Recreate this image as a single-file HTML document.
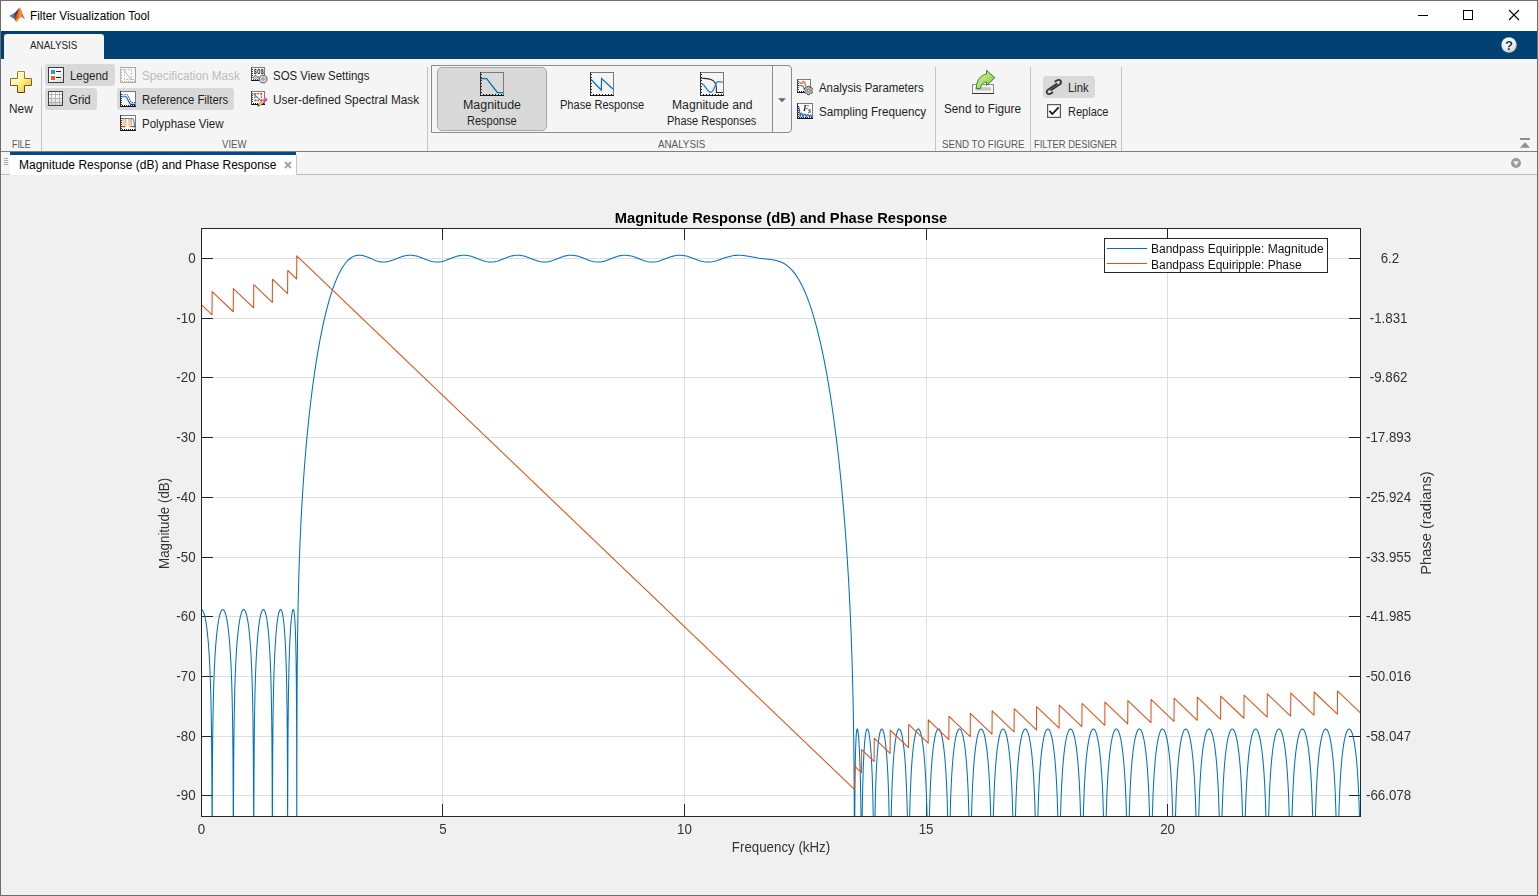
<!DOCTYPE html>
<html><head><meta charset="utf-8"><title>Filter Visualization Tool</title>
<style>
html,body{margin:0;padding:0}
body{width:1538px;height:896px;position:relative;overflow:hidden;background:#f0f0f0;font-family:"Liberation Sans",sans-serif}
.t{position:absolute;white-space:nowrap;font-family:"Liberation Sans",sans-serif;transform-origin:0 0}
svg{position:absolute;overflow:visible}
svg text{font-family:"Liberation Sans",sans-serif}
svg text.sf{font-family:"Liberation Serif",serif}
</style></head><body>
<div style="position:absolute;left:0px;top:0px;width:1538px;height:31px;background:#fff"></div>
<svg style="left:9px;top:7.4px;will-change:transform" width="17" height="16" viewBox="0 0 17 16"><defs>
<linearGradient id="mlb" x1="0" y1="0" x2="1" y2="0"><stop offset="0" stop-color="#4aa3e0"/><stop offset="1" stop-color="#1f5fa8"/></linearGradient>
<linearGradient id="mlo" x1="0" y1="0" x2="1" y2="0"><stop offset="0" stop-color="#9a2c16"/><stop offset="0.45" stop-color="#ee7a2b"/><stop offset="0.62" stop-color="#f2a033"/><stop offset="0.8" stop-color="#d9492a"/><stop offset="1" stop-color="#b52a1f"/></linearGradient>
</defs>
<path d="M0.2 8.7L5.4 5.9C7.2 4.4 8.6 2.6 9.9 1L8.6 6.4L5 11.4L2.4 10.5Z" fill="url(#mlb)"/>
<path d="M5.2 7C6.8 6 8.8 3.2 10.4 0.7L9.8 6L6.6 12.2L4.8 10.9C5.8 9.6 6 8 5.2 7Z" fill="#7a2415" opacity="0.92"/>
<path d="M10.4 0.6C11.4 0.4 12 2 12.6 4C13.4 7 14.6 10.4 16 12.2C14.8 11.8 13.8 10 12.4 10C10.8 10.2 9.2 13.6 7.2 15L4.9 11.2C7.4 9.4 9.2 4.6 10.4 0.6Z" fill="url(#mlo)"/>
<path d="M7.2 15L6.2 13.2C8.4 12.4 9.8 10 11.2 9.2C10 10.6 9 13.8 7.2 15Z" fill="#f4b02c"/></svg>
<span class="t" style="left:30.2px;top:10.29px;font-size:12px;line-height:12px;color:#000;transform:scaleX(0.9789);">Filter Visualization Tool</span>
<svg style="left:1400px;top:0" width="138" height="31" viewBox="0 0 138 31"><g stroke="#000" stroke-width="1" fill="none" shape-rendering="crispEdges"><path d="M18 15.5h10"/><rect x="63.5" y="10.5" width="9" height="9"/></g><path d="M109 10l10 10M119 10l-10 10" stroke="#000" stroke-width="1.1" fill="none"/></svg>
<div style="position:absolute;left:0px;top:31px;width:1538px;height:28px;background:#004173"></div>
<div style="position:absolute;left:4px;top:34px;width:100px;height:25px;background:#f5f5f5;border-radius:3px 3px 0 0"></div>
<span class="t" style="left:30.3px;top:40.11px;font-size:10.5px;line-height:10.5px;color:#222;transform:scaleX(0.9372);">ANALYSIS</span>
<svg style="left:1501px;top:37px;will-change:transform" width="16" height="16" viewBox="0 0 16 16"><defs><radialGradient id="hg" cx="0.4" cy="0.3" r="0.8"><stop offset="0" stop-color="#ffffff"/><stop offset="0.6" stop-color="#e9e9e9"/><stop offset="1" stop-color="#b5b5b5"/></radialGradient></defs>
<circle cx="8" cy="8" r="7.7" fill="url(#hg)"/>
<text x="8" y="12.7" text-anchor="middle" font-size="13.2" font-weight="bold" fill="#27344f">?</text></svg>
<div style="position:absolute;left:0px;top:59px;width:1538px;height:92px;background:#f5f5f5"></div>
<div style="position:absolute;left:0px;top:151px;width:1538px;height:1px;background:#7f7f7f"></div>
<div style="position:absolute;left:41px;top:67px;width:1px;height:84px;background:#c4c4c4"></div>
<div style="position:absolute;left:427px;top:67px;width:1px;height:84px;background:#c4c4c4"></div>
<div style="position:absolute;left:935px;top:67px;width:1px;height:84px;background:#c4c4c4"></div>
<div style="position:absolute;left:1030px;top:67px;width:1px;height:84px;background:#c4c4c4"></div>
<div style="position:absolute;left:1121px;top:67px;width:1px;height:84px;background:#c4c4c4"></div>
<svg style="left:10px;top:71px;will-change:transform" width="22" height="22" viewBox="0 0 22 22"><defs><linearGradient id="npg" x1="0" y1="0" x2="1" y2="1"><stop offset="0" stop-color="#fffef0"/><stop offset="0.45" stop-color="#fff59a"/><stop offset="1" stop-color="#f2b90f"/></linearGradient>
<linearGradient id="nps" x1="0" y1="0" x2="0" y2="1"><stop offset="0" stop-color="#b08425"/><stop offset="1" stop-color="#5a3f0c"/></linearGradient></defs>
<path d="M7 0h8v7h7v8h-7v7h-8v-7h-7v-8h7z" fill="#fff" stroke="#fff" stroke-width="1.5" opacity="0.75"/>
<path d="M7.5 0.5h7v7h7v7h-7v7h-7v-7h-7v-7h7z" fill="url(#npg)" stroke="url(#nps)" stroke-width="1"/>
<path d="M8.5 13.5v-12h5M1.5 13.5v-5h6" fill="none" stroke="#fffde6" stroke-width="1" opacity="0.85"/></svg>
<span class="t" style="left:9.2px;top:103.29px;font-size:12px;line-height:12px;color:#1f1f1f;transform:scaleX(0.9873);">New</span>
<span class="t" style="left:11.7px;top:139.11px;font-size:10.5px;line-height:10.5px;color:#5a5a5a;transform:scaleX(0.8434);">FILE</span>
<div style="position:absolute;left:45px;top:64px;width:70px;height:22px;background:#d9d9d9;border-radius:3px"></div>
<svg style="left:48px;top:67px;will-change:transform" width="16" height="16" viewBox="0 0 16 16"><defs><linearGradient id="lgg" x1="0" y1="0" x2="1" y2="1"><stop offset="0.4" stop-color="#fff"/><stop offset="1" stop-color="#d4d4d8"/></linearGradient></defs>
<rect x="0.5" y="0.5" width="15" height="15" fill="url(#lgg)" stroke="#3d3d3d"/>
<rect x="3" y="3" width="4" height="4" fill="#2a9bd4"/><rect x="3" y="9" width="4" height="4" fill="#e8601c"/>
<rect x="8" y="4" width="5" height="1" fill="#333"/><rect x="8" y="10" width="5" height="1" fill="#222"/></svg>
<span class="t" style="left:70.2px;top:70.29px;font-size:12px;line-height:12px;color:#1f1f1f;transform:scaleX(0.9541);">Legend</span>
<div style="position:absolute;left:45px;top:88px;width:52px;height:22px;background:#d9d9d9;border-radius:3px"></div>
<svg style="left:48px;top:91px;will-change:transform" width="15" height="15" viewBox="0 0 15 15"><defs><linearGradient id="grg" x1="0" y1="0" x2="0" y2="1"><stop offset="0.3" stop-color="#fff"/><stop offset="1" stop-color="#d0d0d0"/></linearGradient></defs>
<rect x="0.5" y="0.5" width="14" height="14" fill="url(#grg)" stroke="#444"/>
<g stroke="#b4b4b4" stroke-width="1"><path d="M3.5 1v13M7.5 1v13M11.5 1v13M1 3.5h13M1 7.5h13M1 11.5h13"/></g></svg>
<span class="t" style="left:69.2px;top:94.29px;font-size:12px;line-height:12px;color:#1f1f1f;transform:scaleX(0.9573);">Grid</span>
<svg style="left:120px;top:67px;will-change:transform" width="16" height="16" viewBox="0 0 16 16"><rect x="0.5" y="0.5" width="15" height="15" fill="#f8f8f8" stroke="#a6a6a6"/><rect x="0" y="0" width="1" height="16" fill="#b8b8b8"/><rect x="0" y="15" width="16" height="1" fill="#b0b0b0"/><rect x="1" y="3" width="1" height="1" fill="#b8b8b8"/><rect x="1" y="5" width="1" height="1" fill="#b8b8b8"/><rect x="1" y="7" width="1" height="1" fill="#b8b8b8"/><rect x="1" y="9" width="1" height="1" fill="#b8b8b8"/><rect x="1" y="11" width="1" height="1" fill="#b8b8b8"/><rect x="1" y="13" width="1" height="1" fill="#b8b8b8"/><rect x="2" y="14" width="1" height="1" fill="#b0b0b0"/><rect x="4" y="14" width="1" height="1" fill="#b0b0b0"/><rect x="6" y="14" width="1" height="1" fill="#b0b0b0"/><rect x="8" y="14" width="1" height="1" fill="#b0b0b0"/><rect x="10" y="14" width="1" height="1" fill="#b0b0b0"/><rect x="12" y="14" width="1" height="1" fill="#b0b0b0"/><rect x="14" y="14" width="1" height="1" fill="#b0b0b0"/><rect x="4.5" y="2.5" width="7" height="10" fill="none" stroke="#f2b59c" stroke-dasharray="2 1.4"/><path d="M2 2.5h1.5L11 12.5h3" fill="none" stroke="#9cc3e6" stroke-width="1"/></svg>
<span class="t" style="left:142.3px;top:70.29px;font-size:12px;line-height:12px;color:#bcbcbc;transform:scaleX(0.9776);">Specification Mask</span>
<div style="position:absolute;left:117px;top:88px;width:117px;height:22px;background:#d9d9d9;border-radius:3px"></div>
<svg style="left:120px;top:91px;will-change:transform" width="16" height="16" viewBox="0 0 16 16"><defs><linearGradient id="rfg" x1="0" y1="0" x2="1" y2="1"><stop offset="0" stop-color="#4a9ad8"/><stop offset="1" stop-color="#163a96"/></linearGradient></defs><rect x="0.5" y="0.5" width="15" height="15" fill="#fff" stroke="#7a7a7a"/><rect x="0" y="0" width="1" height="16" fill="#333"/><rect x="0" y="15" width="16" height="1" fill="#151515"/><rect x="1" y="3" width="1" height="1" fill="#333"/><rect x="1" y="5" width="1" height="1" fill="#333"/><rect x="1" y="7" width="1" height="1" fill="#333"/><rect x="1" y="9" width="1" height="1" fill="#333"/><rect x="1" y="11" width="1" height="1" fill="#333"/><rect x="1" y="13" width="1" height="1" fill="#333"/><rect x="2" y="14" width="1" height="1" fill="#151515"/><rect x="4" y="14" width="1" height="1" fill="#151515"/><rect x="6" y="14" width="1" height="1" fill="#151515"/><rect x="8" y="14" width="1" height="1" fill="#151515"/><rect x="10" y="14" width="1" height="1" fill="#151515"/><rect x="12" y="14" width="1" height="1" fill="#151515"/><rect x="14" y="14" width="1" height="1" fill="#151515"/><path d="M2 5.5h4L10.5 13.5h4.5" fill="none" stroke="url(#rfg)" stroke-width="1.3"/><path d="M2 3.5h5L11.5 11.5h3.5" fill="none" stroke="url(#rfg)" stroke-width="1.2" stroke-dasharray="1.4 1"/></svg>
<span class="t" style="left:142.2px;top:94.29px;font-size:12px;line-height:12px;color:#1f1f1f;transform:scaleX(0.9435);">Reference Filters</span>
<svg style="left:120px;top:115px;will-change:transform" width="16" height="16" viewBox="0 0 16 16"><defs><linearGradient id="ppy" x1="0" y1="0" x2="0" y2="1"><stop offset="0" stop-color="#f0c060"/><stop offset="1" stop-color="#f8e0a0"/></linearGradient></defs><rect x="0.5" y="0.5" width="15" height="15" fill="#fff" stroke="#7a7a7a"/><rect x="0" y="0" width="1" height="16" fill="#333"/><rect x="0" y="15" width="16" height="1" fill="#151515"/><rect x="1" y="3" width="1" height="1" fill="#333"/><rect x="1" y="5" width="1" height="1" fill="#333"/><rect x="1" y="7" width="1" height="1" fill="#333"/><rect x="1" y="9" width="1" height="1" fill="#333"/><rect x="1" y="11" width="1" height="1" fill="#333"/><rect x="1" y="13" width="1" height="1" fill="#333"/><rect x="2" y="14" width="1" height="1" fill="#151515"/><rect x="4" y="14" width="1" height="1" fill="#151515"/><rect x="6" y="14" width="1" height="1" fill="#151515"/><rect x="8" y="14" width="1" height="1" fill="#151515"/><rect x="10" y="14" width="1" height="1" fill="#151515"/><rect x="12" y="14" width="1" height="1" fill="#151515"/><rect x="14" y="14" width="1" height="1" fill="#151515"/><rect x="2.4" y="4" width="2" height="7.5" fill="url(#ppy)"/><rect x="4.7" y="4" width="1.8" height="7.5" fill="#f4b8a0"/><rect x="8.2" y="4" width="2" height="7.5" fill="url(#ppy)"/><rect x="10.4" y="4" width="1.8" height="7.5" fill="#f2a890"/><rect x="2" y="11" width="3" height="1.2" fill="#e2480e"/><rect x="9.5" y="11" width="2" height="1.2" fill="#f0a010"/><rect x="11.5" y="11" width="2" height="1.2" fill="#e2480e"/><path d="M2 3.5h10.5C14 3.8 14.2 8 14.6 11.6" fill="none" stroke="#3a88cc" stroke-width="1.2"/><rect x="13.5" y="11" width="1.5" height="1.2" fill="#163a96"/></svg>
<span class="t" style="left:142.2px;top:118.29px;font-size:12px;line-height:12px;color:#1f1f1f;transform:scaleX(0.9570);">Polyphase View</span>
<svg style="left:251px;top:67px;will-change:transform" width="17" height="17" viewBox="0 0 17 17"><rect x="0.5" y="0.5" width="13" height="13" fill="#fff" stroke="#7a7a7a"/><rect x="0" y="0" width="1" height="14" fill="#4a4a4a"/><rect x="0" y="13" width="14" height="1" fill="#151515"/><rect x="1" y="2" width="1" height="1" fill="#4a4a4a"/><rect x="1" y="4" width="1" height="1" fill="#4a4a4a"/><rect x="1" y="6" width="1" height="1" fill="#4a4a4a"/><rect x="1" y="8" width="1" height="1" fill="#4a4a4a"/><rect x="1" y="10" width="1" height="1" fill="#4a4a4a"/><rect x="2" y="12" width="1" height="1" fill="#151515"/><rect x="4" y="12" width="1" height="1" fill="#151515"/><rect x="6" y="12" width="1" height="1" fill="#151515"/><rect x="8" y="12" width="1" height="1" fill="#151515"/><rect x="10" y="12" width="1" height="1" fill="#151515"/><rect x="12" y="12" width="1" height="1" fill="#151515"/><text transform="translate(3 6.9) scale(0.6 1)" font-size="6.7" font-weight="bold" fill="#2a2a2a" stroke="#2a2a2a" stroke-width="0.3" letter-spacing="1.1">SOS</text><path d="M2 12.5L4.4 9.6L6.4 12L8.4 10L10 12.5Z" fill="#f4a88a"/><path d="M2 11L4.4 8.4L6.6 10.6L8 9.4" fill="none" stroke="#2f86d6" stroke-width="1.1"/><path d="M10.4 8.3h3.4l2.1 2v3.4l-2.1 2.1h-3.4l-2.1-2.1v-3.4z" fill="#d4d4d4" stroke="#4c4c4c" stroke-width="0.9" stroke-linejoin="round"/><path d="M11.4 10h1.4v1.3h1.3v1.4h-1.3v1.3h-1.4v-1.3h-1.3v-1.4h1.3z" fill="#a4a4a4"/></svg>
<span class="t" style="left:272.9px;top:70.29px;font-size:12px;line-height:12px;color:#1f1f1f;transform:scaleX(0.9529);">SOS View Settings</span>
<svg style="left:251px;top:91px;will-change:transform" width="18" height="18" viewBox="0 0 18 18"><rect x="0.5" y="0.5" width="13" height="13" fill="#fff" stroke="#7a7a7a"/><rect x="0" y="0" width="1" height="14" fill="#4a4a4a"/><rect x="0" y="13" width="14" height="1" fill="#151515"/><rect x="1" y="2" width="1" height="1" fill="#4a4a4a"/><rect x="1" y="4" width="1" height="1" fill="#4a4a4a"/><rect x="1" y="6" width="1" height="1" fill="#4a4a4a"/><rect x="1" y="8" width="1" height="1" fill="#4a4a4a"/><rect x="1" y="10" width="1" height="1" fill="#4a4a4a"/><rect x="2" y="12" width="1" height="1" fill="#151515"/><rect x="4" y="12" width="1" height="1" fill="#151515"/><rect x="6" y="12" width="1" height="1" fill="#151515"/><rect x="8" y="12" width="1" height="1" fill="#151515"/><rect x="10" y="12" width="1" height="1" fill="#151515"/><rect x="12" y="12" width="1" height="1" fill="#151515"/><path d="M4.05 4V2.65H5.5M6.2 2.65H8M8.9 2.65H10.45V4.2M10.45 5.2V7.1M10.45 8.3V9.5H8.9M8 9.5H6.2M5.5 9.5H4.05V8.3M4.05 7.1V5.2" fill="none" stroke="#e2480e" stroke-width="1.3"/><path d="M2.2 2.6L9.8 9.3" stroke="#2f86d6" stroke-width="1.1"/><g transform="translate(6.2 15.6) rotate(-41)"><path d="M0 0L2.4 -1.3L2.4 1.3Z" fill="#222"/><rect x="2.4" y="-1.4" width="6.2" height="2.8" fill="#c98a35"/><rect x="2.4" y="-0.6" width="6.2" height="1.1" fill="#f3cd80"/><rect x="8.6" y="-1.7" width="3.8" height="3.4" fill="#cf3f86"/><rect x="8.6" y="-1.7" width="3.8" height="1.5" fill="#ea7ab0"/></g></svg>
<span class="t" style="left:272.9px;top:94.29px;font-size:12px;line-height:12px;color:#1f1f1f;transform:scaleX(0.9875);">User-defined Spectral Mask</span>
<span class="t" style="left:222.2px;top:139.11px;font-size:10.5px;line-height:10.5px;color:#5a5a5a;transform:scaleX(0.9130);">VIEW</span>
<div style="position:absolute;left:431px;top:65px;width:360px;height:67px;border:1px solid #8c8c8c;border-radius:0 4px 4px 0;box-sizing:content-box;width:359px;height:66px"></div>
<div style="position:absolute;left:772px;top:66px;width:1px;height:66px;background:#8c8c8c"></div>
<div style="position:absolute;left:437px;top:67px;width:109px;height:63px;background:#d9d9d9;border:1px solid #a6a6a6;border-radius:5px;box-sizing:border-box;width:110px;height:64px"></div>
<svg style="left:480px;top:72px;will-change:transform" width="24" height="24" viewBox="0 0 24 24"><rect x="0.5" y="0.5" width="23" height="23" fill="none" stroke="#7a7a7a"/><rect x="0" y="0" width="1" height="24" fill="#333"/><rect x="0" y="23" width="24" height="1" fill="#151515"/><rect x="1" y="2" width="1" height="1" fill="#333"/><rect x="1" y="5" width="1" height="1" fill="#333"/><rect x="1" y="8" width="1" height="1" fill="#333"/><rect x="1" y="11" width="1" height="1" fill="#333"/><rect x="1" y="14" width="1" height="1" fill="#333"/><rect x="1" y="17" width="1" height="1" fill="#333"/><rect x="1" y="20" width="1" height="1" fill="#333"/><rect x="3" y="22" width="1" height="1" fill="#151515"/><rect x="6" y="22" width="1" height="1" fill="#151515"/><rect x="9" y="22" width="1" height="1" fill="#151515"/><rect x="12" y="22" width="1" height="1" fill="#151515"/><rect x="15" y="22" width="1" height="1" fill="#151515"/><rect x="18" y="22" width="1" height="1" fill="#151515"/><rect x="21" y="22" width="1" height="1" fill="#151515"/><path d="M1 6.5h5.6L17.4 20.5H23" fill="none" stroke="#0072bd" stroke-width="1.25"/></svg>
<span class="t" style="left:463.1px;top:99.29px;font-size:12px;line-height:12px;color:#1f1f1f;transform:scaleX(1.0351);">Magnitude</span>
<span class="t" style="left:467.3px;top:115.29px;font-size:12px;line-height:12px;color:#1f1f1f;transform:scaleX(0.9180);">Response</span>
<svg style="left:590px;top:72px;will-change:transform" width="24" height="24" viewBox="0 0 24 24"><rect x="0.5" y="0.5" width="23" height="23" fill="none" stroke="#7a7a7a"/><rect x="0" y="0" width="1" height="24" fill="#333"/><rect x="0" y="23" width="24" height="1" fill="#151515"/><rect x="1" y="2" width="1" height="1" fill="#333"/><rect x="1" y="5" width="1" height="1" fill="#333"/><rect x="1" y="8" width="1" height="1" fill="#333"/><rect x="1" y="11" width="1" height="1" fill="#333"/><rect x="1" y="14" width="1" height="1" fill="#333"/><rect x="1" y="17" width="1" height="1" fill="#333"/><rect x="1" y="20" width="1" height="1" fill="#333"/><rect x="3" y="22" width="1" height="1" fill="#151515"/><rect x="6" y="22" width="1" height="1" fill="#151515"/><rect x="9" y="22" width="1" height="1" fill="#151515"/><rect x="12" y="22" width="1" height="1" fill="#151515"/><rect x="15" y="22" width="1" height="1" fill="#151515"/><rect x="18" y="22" width="1" height="1" fill="#151515"/><rect x="21" y="22" width="1" height="1" fill="#151515"/><path d="M1 7.2L11.3 18.2L11.6 6.6L23 17" fill="none" stroke="#0072bd" stroke-width="1.25"/></svg>
<span class="t" style="left:559.9px;top:99.29px;font-size:12px;line-height:12px;color:#1f1f1f;transform:scaleX(0.9213);">Phase Response</span>
<svg style="left:700px;top:72px;will-change:transform" width="24" height="24" viewBox="0 0 24 24"><rect x="0.5" y="0.5" width="23" height="23" fill="none" stroke="#7a7a7a"/><rect x="0" y="0" width="1" height="24" fill="#333"/><rect x="0" y="23" width="24" height="1" fill="#151515"/><rect x="1" y="2" width="1" height="1" fill="#333"/><rect x="1" y="5" width="1" height="1" fill="#333"/><rect x="1" y="8" width="1" height="1" fill="#333"/><rect x="1" y="11" width="1" height="1" fill="#333"/><rect x="1" y="14" width="1" height="1" fill="#333"/><rect x="1" y="17" width="1" height="1" fill="#333"/><rect x="1" y="20" width="1" height="1" fill="#333"/><rect x="3" y="22" width="1" height="1" fill="#151515"/><rect x="6" y="22" width="1" height="1" fill="#151515"/><rect x="9" y="22" width="1" height="1" fill="#151515"/><rect x="12" y="22" width="1" height="1" fill="#151515"/><rect x="15" y="22" width="1" height="1" fill="#151515"/><rect x="18" y="22" width="1" height="1" fill="#151515"/><rect x="21" y="22" width="1" height="1" fill="#151515"/><path d="M1 6C4 6.6 8 6.2 11.5 7.8C15 9.6 16.4 13 16.4 16V20.5H23" fill="none" stroke="#2a2a2a" stroke-width="1.1"/><path d="M1.5 11.4C6 13 7 20.2 10.6 20.2C14.4 20.2 14.6 12 17 10C19 8.8 21 10 23 10.4" fill="none" stroke="#1f80cc" stroke-width="1.3"/></svg>
<span class="t" style="left:671.6px;top:99.29px;font-size:12px;line-height:12px;color:#1f1f1f;transform:scaleX(1.0128);">Magnitude and</span>
<span class="t" style="left:667.3px;top:115.29px;font-size:12px;line-height:12px;color:#1f1f1f;transform:scaleX(0.9169);">Phase Responses</span>
<svg style="left:778px;top:98px" width="8" height="5" viewBox="0 0 8 5"><path d="M0 0.3h8L4 4.3z" fill="#666"/></svg>
<span class="t" style="left:657.8px;top:139.11px;font-size:10.5px;line-height:10.5px;color:#5a5a5a;transform:scaleX(0.9332);">ANALYSIS</span>
<svg style="left:797px;top:79px;will-change:transform" width="17" height="17" viewBox="0 0 17 17"><rect x="0.5" y="0.5" width="13" height="13" fill="#fff" stroke="#7a7a7a"/><rect x="0" y="0" width="1" height="14" fill="#4a4a4a"/><rect x="0" y="13" width="14" height="1" fill="#151515"/><rect x="1" y="2" width="1" height="1" fill="#4a4a4a"/><rect x="1" y="4" width="1" height="1" fill="#4a4a4a"/><rect x="1" y="6" width="1" height="1" fill="#4a4a4a"/><rect x="1" y="8" width="1" height="1" fill="#4a4a4a"/><rect x="1" y="10" width="1" height="1" fill="#4a4a4a"/><rect x="2" y="12" width="1" height="1" fill="#151515"/><rect x="4" y="12" width="1" height="1" fill="#151515"/><rect x="6" y="12" width="1" height="1" fill="#151515"/><rect x="8" y="12" width="1" height="1" fill="#151515"/><rect x="10" y="12" width="1" height="1" fill="#151515"/><rect x="12" y="12" width="1" height="1" fill="#151515"/><path d="M2 3.6C3.2 3 3.6 5.2 4.8 4.4C6 3.4 6 2.2 7 2.6C8.2 3.2 8 6.4 9.4 8" fill="none" stroke="#e8703a" stroke-width="1.35"/><path d="M2 6.6H5C6.6 6.8 7 8.6 7.6 11" fill="none" stroke="#3f8ad4" stroke-width="1.35"/><path d="M13.68 8.95L14.69 8.62L15.59 10.17L14.80 10.89L14.80 12.11L15.59 12.83L14.69 14.38L13.68 14.05L12.62 14.66L12.40 15.71L10.60 15.71L10.38 14.66L9.32 14.05L8.31 14.38L7.41 12.83L8.20 12.11L8.20 10.89L7.41 10.17L8.31 8.62L9.32 8.95L10.38 8.34L10.60 7.29L12.40 7.29L12.62 8.34Z" fill="#c6c6c6" stroke="#404040" stroke-width="0.9" stroke-linejoin="round"/><circle cx="11.5" cy="11.5" r="1.29" fill="#fff" stroke="#4a4a4a" stroke-width="0.9"/></svg>
<span class="t" style="left:818.8px;top:82.29px;font-size:12px;line-height:12px;color:#1f1f1f;transform:scaleX(0.9506);">Analysis Parameters</span>
<svg style="left:797px;top:103px;will-change:transform" width="16" height="16" viewBox="0 0 16 16"><rect x="0.5" y="0.5" width="15" height="15" fill="#fff" stroke="#7a7a7a"/><rect x="0" y="0" width="1" height="16" fill="#333"/><rect x="0" y="15" width="16" height="1" fill="#151515"/><rect x="1" y="3" width="1" height="1" fill="#333"/><rect x="1" y="5" width="1" height="1" fill="#333"/><rect x="1" y="7" width="1" height="1" fill="#333"/><rect x="1" y="9" width="1" height="1" fill="#333"/><rect x="1" y="11" width="1" height="1" fill="#333"/><rect x="1" y="13" width="1" height="1" fill="#333"/><rect x="2" y="14" width="1" height="1" fill="#151515"/><rect x="4" y="14" width="1" height="1" fill="#151515"/><rect x="6" y="14" width="1" height="1" fill="#151515"/><rect x="8" y="14" width="1" height="1" fill="#151515"/><rect x="10" y="14" width="1" height="1" fill="#151515"/><rect x="12" y="14" width="1" height="1" fill="#151515"/><rect x="14" y="14" width="1" height="1" fill="#151515"/><g font-style="italic" font-weight="bold" fill="#303030"><text class="sf" x="6" y="7.8" font-size="8.6">F</text><text class="sf" x="11" y="9.7" font-size="8">s</text></g><path d="M1.6 4C2.6 5.4 2.8 10 3.2 14.3C3.6 9.4 5.2 8.6 6 14.3C6.5 10.4 8.6 10 9.3 14.3C9.8 11 11.8 10.6 12.5 14.3C12.9 11.6 14.2 11.4 14.8 14" fill="none" stroke="#1f68c4" stroke-width="1.2"/></svg>
<span class="t" style="left:818.8px;top:106.29px;font-size:12px;line-height:12px;color:#1f1f1f;transform:scaleX(0.9741);">Sampling Frequency</span>
<svg style="left:971px;top:70px;will-change:transform" width="25" height="24" viewBox="0 0 25 24"><defs><linearGradient id="sfg" x1="0" y1="0" x2="1" y2="1"><stop offset="0" stop-color="#d8f0a0"/><stop offset="0.5" stop-color="#b2e070"/><stop offset="1" stop-color="#6db83a"/></linearGradient></defs>
<rect x="1.5" y="14.5" width="21" height="9" fill="#f4f4f4" stroke="#8c8c8c"/><rect x="1" y="23" width="22" height="1" fill="#333"/>
<rect x="4.3" y="17.2" width="15.5" height="3.4" fill="#c6c6c6"/>
<path d="M15.6 0.4L23.8 7.8L15.6 15.4V12C12.6 12 10.2 14 9.4 18.6H5.3C5.2 10.6 9.6 5 15.6 4Z" fill="url(#sfg)" stroke="#2f8020" stroke-width="1" stroke-linejoin="round"/></svg>
<span class="t" style="left:944.3px;top:103.29px;font-size:12px;line-height:12px;color:#1f1f1f;transform:scaleX(0.9783);">Send to Figure</span>
<span class="t" style="left:941.7px;top:139.11px;font-size:10.5px;line-height:10.5px;color:#5a5a5a;transform:scaleX(0.9283);">SEND TO FIGURE</span>
<div style="position:absolute;left:1043px;top:76px;width:52px;height:22px;background:#d9d9d9;border-radius:3px"></div>
<svg style="left:1046px;top:79px;will-change:transform" width="16" height="17" viewBox="0 0 16 17"><g fill="none" stroke="#383838" stroke-width="1.9" stroke-linecap="round" stroke-linejoin="round">
<path d="M10.8 4.9L1.9 10.7A2.3 2.3 0 0 0 4.4 14.8L6.4 13.6"/><path d="M10.8 4.9L1.9 10.7A2.3 2.3 0 0 0 4.4 14.8L6.4 13.6" transform="rotate(180 7.9 8)"/></g></svg>
<span class="t" style="left:1068.2px;top:82.29px;font-size:12px;line-height:12px;color:#1f1f1f;transform:scaleX(0.9358);">Link</span>
<svg style="left:1047px;top:104px;will-change:transform" width="14" height="14" viewBox="0 0 14 14"><rect x="0.6" y="0.6" width="12.8" height="12.8" fill="#fff" stroke="#5a5a5a" stroke-width="1.2"/><path d="M2.4 6.9L5.3 10L11.6 3.4" fill="none" stroke="#111" stroke-width="1.7"/></svg>
<span class="t" style="left:1067.8px;top:106.29px;font-size:12px;line-height:12px;color:#1f1f1f;transform:scaleX(0.9199);">Replace</span>
<span class="t" style="left:1034.1px;top:139.11px;font-size:10.5px;line-height:10.5px;color:#5a5a5a;transform:scaleX(0.8921);">FILTER DESIGNER</span>
<svg style="left:1520px;top:138px" width="10" height="10" viewBox="0 0 10 10"><rect x="0" y="0" width="10" height="2" fill="#8f8f8f"/><path d="M5 4.2L10 9.8H0z" fill="#8f8f8f"/></svg>
<div style="position:absolute;left:0px;top:152px;width:1538px;height:22px;background:#f5f5f5"></div>
<div style="position:absolute;left:0px;top:174px;width:1538px;height:1px;background:#b9b9b9"></div>
<div style="position:absolute;left:1px;top:152px;width:9px;height:22px;background:#f5f5f5;border-right:1px solid #bdbdbd;border-bottom:1px solid #bdbdbd;border-radius:0 0 2px 0"></div>
<div style="position:absolute;left:4px;top:158px;width:4px;height:1px;background:#a8a8a8"></div>
<div style="position:absolute;left:4px;top:160px;width:4px;height:1px;background:#a8a8a8"></div>
<div style="position:absolute;left:4px;top:162px;width:4px;height:1px;background:#a8a8a8"></div>
<div style="position:absolute;left:4px;top:164px;width:4px;height:1px;background:#a8a8a8"></div>
<div style="position:absolute;left:10px;top:152px;width:286px;height:23px;background:#fff"></div>
<div style="position:absolute;left:10px;top:152px;width:286px;height:3px;background:#004b87"></div>
<div style="position:absolute;left:296px;top:155px;width:1px;height:20px;background:#c8c8c8"></div>
<span class="t" style="left:19.2px;top:159.29px;font-size:12px;line-height:12px;color:#000;transform:scaleX(1.0001);">Magnitude Response (dB) and Phase Response</span>
<svg style="left:284px;top:161px" width="8" height="8" viewBox="0 0 8 8"><path d="M1 1l6 6M7 1l-6 6" stroke="#a0a0a0" stroke-width="1.8" fill="none"/></svg>
<svg style="left:1511px;top:158px" width="10" height="10" viewBox="0 0 10 10"><circle cx="5" cy="5" r="5" fill="#9b9b9b"/><path d="M2.2 3.3h5.6L5 7.8z" fill="#f5f5f5"/></svg>
<svg style="left:0;top:0;will-change:transform" width="1538" height="896" viewBox="0 0 1538 896">
<defs><clipPath id="axclip"><rect x="201" y="228" width="1160" height="589"/></clipPath></defs>
<rect x="201" y="228" width="1160" height="589" fill="#fff"/>
<g stroke="#dfdfdf" stroke-width="1" shape-rendering="crispEdges">
<line x1="202" x2="1360" y1="258.5" y2="258.5"/>
<line x1="202" x2="1360" y1="318.5" y2="318.5"/>
<line x1="202" x2="1360" y1="377.5" y2="377.5"/>
<line x1="202" x2="1360" y1="437.5" y2="437.5"/>
<line x1="202" x2="1360" y1="497.5" y2="497.5"/>
<line x1="202" x2="1360" y1="557.5" y2="557.5"/>
<line x1="202" x2="1360" y1="616.5" y2="616.5"/>
<line x1="202" x2="1360" y1="676.5" y2="676.5"/>
<line x1="202" x2="1360" y1="736.5" y2="736.5"/>
<line x1="202" x2="1360" y1="795.5" y2="795.5"/>
<line x1="442.5" x2="442.5" y1="229" y2="816"/>
<line x1="684.5" x2="684.5" y1="229" y2="816"/>
<line x1="926.5" x2="926.5" y1="229" y2="816"/>
<line x1="1167.5" x2="1167.5" y1="229" y2="816"/>
</g>
<g stroke="#262626" stroke-width="1" fill="none" shape-rendering="crispEdges">
<line x1="201.5" x2="213.0" y1="258.5" y2="258.5"/>
<line x1="1360.5" x2="1349.0" y1="258.5" y2="258.5"/>
<line x1="201.5" x2="213.0" y1="318.5" y2="318.5"/>
<line x1="1360.5" x2="1349.0" y1="318.5" y2="318.5"/>
<line x1="201.5" x2="213.0" y1="377.5" y2="377.5"/>
<line x1="1360.5" x2="1349.0" y1="377.5" y2="377.5"/>
<line x1="201.5" x2="213.0" y1="437.5" y2="437.5"/>
<line x1="1360.5" x2="1349.0" y1="437.5" y2="437.5"/>
<line x1="201.5" x2="213.0" y1="497.5" y2="497.5"/>
<line x1="1360.5" x2="1349.0" y1="497.5" y2="497.5"/>
<line x1="201.5" x2="213.0" y1="557.5" y2="557.5"/>
<line x1="1360.5" x2="1349.0" y1="557.5" y2="557.5"/>
<line x1="201.5" x2="213.0" y1="616.5" y2="616.5"/>
<line x1="1360.5" x2="1349.0" y1="616.5" y2="616.5"/>
<line x1="201.5" x2="213.0" y1="676.5" y2="676.5"/>
<line x1="1360.5" x2="1349.0" y1="676.5" y2="676.5"/>
<line x1="201.5" x2="213.0" y1="736.5" y2="736.5"/>
<line x1="1360.5" x2="1349.0" y1="736.5" y2="736.5"/>
<line x1="201.5" x2="213.0" y1="795.5" y2="795.5"/>
<line x1="1360.5" x2="1349.0" y1="795.5" y2="795.5"/>
<line x1="442.5" x2="442.5" y1="816.5" y2="804.0"/>
<line x1="442.5" x2="442.5" y1="228.5" y2="240.0"/>
<line x1="684.5" x2="684.5" y1="816.5" y2="804.0"/>
<line x1="684.5" x2="684.5" y1="228.5" y2="240.0"/>
<line x1="926.5" x2="926.5" y1="816.5" y2="804.0"/>
<line x1="926.5" x2="926.5" y1="228.5" y2="240.0"/>
<line x1="1167.5" x2="1167.5" y1="816.5" y2="804.0"/>
<line x1="1167.5" x2="1167.5" y1="228.5" y2="240.0"/>
</g>
<g clip-path="url(#axclip)" fill="none" stroke-width="1.05" stroke-linejoin="round">
<path stroke="#0072bd" d="M201.4 609.58L201.82 609.68L202.11 609.86L202.53 610.3L202.82 610.7L203.52 612.12L204.09 613.7L204.8 616.26L205.36 618.83L205.93 621.9L206.5 625.55L207.49 633.59L208.48 644.45L209.18 654.71L209.89 668.23L210.46 682.9L210.88 697.81L211.17 710.98L211.45 728.81L211.73 756.37L211.87 778.81L212.16 846.5L212.44 770.71L212.72 736.72L213.01 716.42L213.43 696L213.85 681.53L214.42 667.2L215.13 653.91L215.84 643.79L216.83 633.07L217.82 625.12L218.38 621.51L218.95 618.48L219.52 615.96L220.22 613.45L220.79 611.92L221.5 610.56L222.06 609.89L222.35 609.7L222.77 609.58L223.2 609.66L223.48 609.83L224.05 610.45L224.75 611.76L225.32 613.25L226.03 615.71L226.59 618.21L227.16 621.21L227.73 624.8L228.72 632.76L229.71 643.55L230.41 653.79L231.12 667.32L231.69 682.04L232.11 697.03L232.4 710.32L232.68 728.37L232.96 756.48L233.1 779.68L233.24 822.82L233.39 846.5L233.53 798.54L233.81 748.49L234.24 714.52L234.8 689.03L235.23 675.95L235.65 665.68L236.22 654.81L236.92 644.23L237.63 635.94L238.48 628.14L239.33 622.11L240.18 617.49L240.89 614.54L241.6 612.32L242.3 610.78L242.73 610.16L243.15 609.76L243.58 609.59L244 609.64L244.43 609.91L244.71 610.22L245.13 610.87L245.56 611.76L246.27 613.79L246.97 616.56L247.68 620.17L248.39 624.73L248.96 629.21L249.52 634.56L250.09 641.01L250.94 653.48L251.5 664.53L252.07 679.17L252.49 694.13L252.92 715.65L253.34 753.67L253.77 846.5L253.91 794.86L254.19 745.15L254.47 720.29L254.9 696.96L255.18 685.82L255.61 672.77L256.03 662.53L256.46 654.17L256.88 647.17L257.45 639.42L258.01 633.05L258.72 626.57L259.43 621.42L260.14 617.35L260.84 614.23L261.55 611.95L262.26 610.45L262.68 609.9L263.11 609.62L263.53 609.61L263.82 609.74L264.24 610.17L264.52 610.61L265.23 612.26L265.94 614.76L266.65 618.21L267.35 622.75L267.92 627.34L268.49 632.95L269.05 639.85L269.48 646.12L270.19 659.5L270.75 674.31L271.18 689.65L271.6 712.11L271.88 735.75L272.03 753.55L272.17 780.97L272.31 843.19L272.45 828.64L272.59 776.04L272.73 750.46L273.02 720.61L273.3 701.83L273.58 688.15L274.01 672.81L274.43 661.19L275.14 646.7L275.85 636.03L276.7 626.52L277.12 622.77L277.69 618.63L278.11 616.1L278.68 613.41L279.24 611.46L279.81 610.2L280.09 609.82L280.38 609.62L280.66 609.58L280.94 609.73L281.22 610.05L281.51 610.55L282.07 612.13L282.78 615.3L283.49 620.03L284.2 626.71L284.76 633.92L285.33 643.43L285.75 652.74L286.18 664.89L286.46 675.42L286.74 689.08L287.03 708.23L287.31 739.8L287.45 768.42L287.59 838.62L287.88 757.39L288.02 732.76L288.44 693.38L289.01 665.72L289.43 651.99L289.86 641.49L290.42 630.79L290.99 622.78L291.56 616.86L291.84 614.59L292.26 611.97L292.69 610.29L292.97 609.71L293.11 609.58L293.26 609.58L293.54 609.94L293.96 611.5L294.39 614.53L294.81 619.46L295.09 624.18L295.38 630.49L295.66 639.05L296.09 659.31L296.37 683.72L296.51 704.44L296.65 742.58L296.79 841.08L296.93 726.48L297.08 692.15L297.22 670.78L297.5 642.41L297.78 622.66L298.21 600.54L298.77 578.26L299.34 560.49L300.05 542.05L300.9 523.45L301.89 504.94L303.02 486.66L304.29 468.69L305.57 452.76L307.13 435.4L308.97 417.19L310.95 399.8L312.93 384.25L315.19 368.35L317.46 354.13L319.86 340.6L322.41 327.81L323.68 321.95L325.1 315.83L326.37 310.65L327.79 305.25L329.2 300.2L330.62 295.47L332.04 291.07L333.45 286.98L334.87 283.18L336.42 279.33L337.84 276.11L339.39 272.88L340.95 269.96L342.51 267.33L344.07 265L345.76 262.76L347.32 261L348.88 259.49L350.43 258.23L352.13 257.13L353.83 256.29L355.53 255.71L357.23 255.36L359.07 255.23L360.48 255.3L361.9 255.48L363.46 255.81L365.01 256.26L367.98 257.34L374.64 260.14L376.34 260.77L377.89 261.25L379.31 261.61L380.72 261.87L382.14 262.03L383.41 262.09L384.97 262.04L386.53 261.87L388.22 261.55L389.92 261.1L393.04 260.05L400.25 257.21L402.24 256.55L403.93 256.06L405.49 255.71L407.05 255.45L408.6 255.29L410.02 255.24L411.58 255.28L413.28 255.44L414.83 255.7L416.53 256.09L418.23 256.57L420.07 257.19L427.29 259.99L430.4 261.04L432.1 261.49L433.66 261.8L435.21 262.01L436.77 262.09L438.19 262.06L439.6 261.94L441.02 261.71L442.57 261.37L444.13 260.93L445.97 260.32L453.33 257.46L456.73 256.33L458.57 255.86L460.41 255.51L462.1 255.31L463.8 255.24L465.36 255.28L467.06 255.44L468.61 255.7L470.31 256.08L472.01 256.57L473.85 257.18L481.07 259.99L484.18 261.05L485.88 261.5L487.44 261.81L489 262.01L490.55 262.09L491.97 262.06L493.38 261.93L494.8 261.7L496.36 261.35L497.91 260.91L499.75 260.29L506.97 257.48L510.37 256.34L512.21 255.86L514.05 255.51L515.75 255.31L517.44 255.24L519 255.28L520.7 255.44L522.26 255.7L523.95 256.09L525.65 256.58L527.49 257.2L534.71 260.01L537.68 261.02L539.38 261.48L540.94 261.8L542.5 262L544.05 262.09L545.47 262.06L546.88 261.94L548.3 261.72L549.85 261.37L551.41 260.93L553.25 260.32L560.47 257.5L563.87 256.36L565.71 255.88L567.55 255.52L569.24 255.32L570.94 255.24L572.5 255.27L574.2 255.43L575.76 255.69L577.45 256.07L579.15 256.55L581.13 257.21L588.21 259.97L591.18 260.99L592.88 261.45L594.44 261.77L595.99 261.99L597.55 262.09L598.97 262.07L600.52 261.94L601.94 261.72L603.5 261.38L605.05 260.95L606.89 260.34L614.25 257.49L617.65 256.35L619.49 255.88L621.33 255.53L623.03 255.32L624.73 255.24L626.28 255.27L627.98 255.42L629.68 255.69L631.38 256.07L633.08 256.55L635.06 257.21L642.28 259.99L645.25 260.99L646.95 261.44L648.5 261.76L650.06 261.98L651.48 262.08L653.03 262.08L654.59 261.96L656.15 261.73L657.7 261.39L659.4 260.93L661.24 260.33L668.74 257.48L672.14 256.37L673.98 255.91L675.82 255.55L677.66 255.33L679.36 255.24L681.06 255.27L682.75 255.41L684.59 255.7L686.43 256.1L688.13 256.57L690.11 257.2L697.47 259.92L700.45 260.9L702.14 261.35L703.7 261.68L705.26 261.92L706.82 262.06L708.51 262.09L710.21 262L711.91 261.79L713.75 261.44L715.45 261.02L717.43 260.44L725.64 257.61L729.6 256.45L731.72 255.96L733.85 255.6L735.83 255.37L737.95 255.25L741.35 255.31L745.17 255.69L748.43 256.2L755.64 257.53L759.32 258.15L763.15 258.67L771.07 259.59L775.03 260.24L777.72 260.9L780.27 261.75L782.68 262.81L784.94 264.08L787.06 265.54L789.19 267.29L791.31 269.36L793.29 271.61L795.27 274.17L797.25 277.08L799.24 280.34L801.08 283.7L802.92 287.41L804.76 291.47L806.6 295.89L808.44 300.7L810.28 305.92L811.97 311.1L813.81 317.14L815.51 323.11L817.21 329.5L818.91 336.31L820.61 343.58L822.16 350.65L823.72 358.15L825.28 366.09L826.84 374.51L828.39 383.43L829.95 392.9L831.36 402.01L834.05 420.79L836.6 440.63L839.01 461.54L841.27 483.58L843.39 506.85L845.38 531.52L847.07 555.71L848.63 581.34L849.91 605.87L851.04 631.82L851.89 655.38L852.74 685.2L853.3 711.76L853.73 739.28L854.01 765.81L854.15 784.52L854.43 846.5L854.58 846.5L855 782.29L855.42 755.66L855.71 745.84L856.13 736.7L856.42 732.98L856.7 730.61L856.98 729.31L857.12 729.02L857.26 728.93L857.41 729.04L857.55 729.35L857.97 731.34L858.4 734.89L858.68 738.15L859.1 744.48L859.39 749.8L859.95 763.88L860.38 778.88L860.66 792.43L860.94 811.08L861.23 840.59L861.37 846.5L861.94 846.5L862.22 815.72L862.64 789.72L863.21 769.07L863.78 755.68L864.48 744.44L864.91 739.63L865.33 735.92L865.76 733.11L866.32 730.57L866.75 729.47L867.03 729.08L867.31 728.96L867.6 729.09L867.88 729.48L868.16 730.12L868.45 731.01L869.01 733.58L869.58 737.23L870.14 742.11L870.57 746.69L871.14 754.29L871.56 761.42L872.27 777.18L872.83 795.61L873.26 816.2L873.68 846.5L874.53 846.5L875.1 810.47L875.52 792.35L876.23 772.42L876.65 763.84L877.08 756.87L877.5 751.12L878.07 744.9L878.49 741.13L879.06 737.06L879.63 733.94L880.33 731.19L880.9 729.81L881.18 729.37L881.61 729.02L882.03 729.03L882.46 729.39L882.88 730.1L883.17 730.77L883.87 733.18L884.58 736.67L885.29 741.41L885.85 746.23L886.42 752.17L886.99 759.5L887.55 768.67L887.98 777.21L888.69 796.45L889.11 813.26L889.68 846.5L890.67 846.5L890.81 843.71L891.23 816.5L891.52 804.17L891.94 790.1L892.37 779.31L892.79 770.66L893.21 763.52L893.78 755.74L894.35 749.45L894.91 744.32L895.48 740.14L896.19 736.02L896.89 732.95L897.6 730.81L897.88 730.19L898.31 729.5L898.73 729.1L899.16 728.97L899.58 729.12L900.01 729.55L900.43 730.25L900.86 731.23L901.28 732.51L901.71 734.09L902.41 737.46L903.12 741.83L903.83 747.41L904.54 754.46L905.1 761.47L905.67 770.09L906.09 777.99L906.8 795.32L907.37 815.84L907.93 846.5L909.07 846.5L909.21 841.61L909.63 817.13L910.2 796.35L910.91 778.92L911.33 771.01L911.9 762.39L912.32 757.02L912.89 750.98L913.45 745.97L914.02 741.8L914.59 738.36L915.29 734.93L915.86 732.8L916.57 730.83L916.99 730L917.56 729.28L917.98 729.02L918.27 728.98L918.55 729.04L918.83 729.21L919.11 729.49L919.54 730.1L920.11 731.3L920.53 732.49L921.1 734.5L921.52 736.34L922.37 740.96L923.22 747.06L924.07 755.01L924.78 763.52L925.34 772.04L925.91 782.71L926.33 792.77L926.76 805.55L927.04 816.38L927.61 846.5L928.88 846.5L929.31 822.72L929.59 810.64L930.01 796.73L930.44 785.97L931 774.69L931.57 765.77L932.28 756.91L933.13 748.66L933.98 742.33L934.97 736.8L935.39 734.95L935.96 732.91L936.38 731.67L936.95 730.4L937.37 729.72L937.94 729.16L938.22 729.02L938.5 728.98L938.79 729.04L939.07 729.19L939.64 729.79L940.2 730.78L940.77 732.17L941.19 733.5L941.9 736.29L942.47 739.07L943.03 742.42L943.6 746.39L944.59 755.21L945.44 765.28L946.01 773.83L946.43 781.59L947.14 798.46L947.7 818.12L948.27 846.5L949.54 846.5L950.11 818.41L950.39 807.59L950.82 794.84L951.24 784.78L951.67 776.55L952.23 767.55L952.8 760.21L953.51 752.75L954.22 746.74L954.92 741.87L955.77 737.27L956.62 733.81L957.05 732.46L957.61 731.02L958.04 730.2L958.46 729.59L958.89 729.19L959.17 729.04L959.45 728.98L959.73 729L960.02 729.12L960.44 729.47L960.87 730.03L961.29 730.79L961.86 732.15L962.28 733.43L963.13 736.73L963.98 741.11L964.83 746.78L965.54 752.71L966.25 760.04L966.81 767.21L967.38 775.94L967.8 783.89L968.23 793.51L968.79 810.37L969.22 828.32L969.5 845.2L969.64 846.5L970.92 846.5L971.48 817.65L971.91 802.72L972.33 791.31L972.76 782.13L973.32 772.24L973.89 764.23L974.6 756.13L975.3 749.61L976.01 744.31L976.72 740.01L977.57 735.94L978.42 732.9L978.84 731.72L979.27 730.77L979.69 730.02L980.12 729.48L980.54 729.14L980.82 729.02L981.11 728.98L981.39 729.03L981.67 729.17L982.1 729.54L982.66 730.35L983.09 731.19L983.65 732.64L984.08 733.98L984.93 737.39L985.78 741.87L986.63 747.63L987.33 753.62L988.04 761L988.61 768.22L989.17 777L989.74 787.99L990.16 798.36L990.59 811.59L990.87 822.9L991.3 846.5L992.71 846.5L993.42 812.81L994.13 792.04L994.69 780.19L995.26 770.83L995.83 763.21L996.53 755.43L997.24 749.14L997.95 744.01L998.66 739.83L999.51 735.86L1000.35 732.88L1001.2 730.79L1001.63 730.05L1002.05 729.51L1002.48 729.16L1002.76 729.03L1003.04 728.98L1003.33 729.02L1003.61 729.15L1004.03 729.49L1004.6 730.25L1005.03 731.04L1005.59 732.43L1006.02 733.71L1007.01 737.6L1007.86 742.07L1008.71 747.78L1009.41 753.71L1010.12 761L1010.69 768.1L1011.25 776.71L1012.1 793.93L1012.81 815.43L1013.38 843.51L1013.52 846.5L1014.79 846.5L1014.93 843.8L1015.22 827.78L1015.64 810.49L1016.07 797.7L1016.63 784.67L1017.2 774.53L1017.91 764.53L1018.75 755.19L1019.6 747.93L1020.59 741.39L1021.58 736.5L1022.15 734.32L1022.72 732.54L1023.28 731.15L1023.85 730.11L1024.42 729.41L1024.98 729.05L1025.26 728.99L1025.69 729.05L1026.26 729.42L1026.82 730.13L1027.39 731.18L1027.95 732.58L1028.52 734.35L1029.23 737.14L1029.79 739.87L1030.36 743.1L1030.93 746.89L1031.92 755.15L1032.91 766.2L1033.47 774.29L1033.9 781.56L1034.32 790.23L1034.75 800.88L1035.31 820.04L1035.88 846.5L1037.3 846.5L1037.86 817.64L1038.57 795.56L1038.99 785.95L1039.56 775.65L1040.13 767.33L1040.69 760.45L1041.4 753.36L1042.11 747.57L1042.96 741.98L1043.81 737.6L1044.8 733.76L1045.22 732.49L1045.79 731.12L1046.21 730.32L1046.78 729.54L1047.2 729.18L1047.77 728.98L1048.33 729.1L1048.76 729.4L1049.33 730.09L1049.75 730.83L1050.32 732.11L1050.74 733.31L1051.73 736.95L1052.58 741.13L1053.43 746.47L1054.28 753.23L1054.99 760.25L1055.55 767.06L1056.12 775.27L1056.69 785.41L1057.11 794.82L1057.82 816.3L1058.38 844.33L1058.53 846.5L1059.8 846.5L1059.94 844.89L1060.22 828.83L1060.65 811.5L1061.07 798.68L1061.64 785.61L1062.35 773.24L1063.05 763.66L1063.9 754.67L1064.75 747.62L1065.74 741.26L1066.73 736.47L1067.3 734.33L1067.87 732.58L1068.43 731.19L1069 730.15L1069.56 729.45L1070.13 729.06L1070.41 728.99L1070.84 729.03L1071.4 729.36L1071.97 730.01L1072.54 730.99L1073.1 732.31L1073.67 733.99L1074.38 736.63L1074.94 739.22L1075.65 743.12L1076.22 746.85L1077.21 754.96L1078.2 765.75L1078.76 773.61L1079.19 780.65L1079.61 789L1080.04 799.17L1080.46 812.06L1080.75 822.99L1081.17 845.7L1081.31 846.5L1082.59 846.5L1082.73 844.19L1083.29 816.37L1084 795L1084.43 785.61L1084.99 775.51L1085.56 767.32L1086.12 760.52L1086.83 753.51L1087.68 746.74L1088.53 741.4L1089.38 737.19L1090.37 733.51L1090.79 732.3L1091.36 730.98L1091.79 730.22L1092.35 729.49L1092.78 729.15L1093.34 728.98L1093.91 729.12L1094.33 729.43L1094.9 730.12L1095.32 730.85L1095.89 732.12L1096.31 733.31L1097.31 736.9L1098.15 741.01L1099 746.24L1099.85 752.85L1100.56 759.69L1101.27 768.14L1101.83 776.48L1102.4 786.79L1102.82 796.39L1103.53 818.43L1104.1 846.5L1105.51 846.5L1105.66 842.91L1106.22 815.73L1106.79 798.22L1107.21 788.28L1107.64 780.1L1108.06 773.19L1108.63 765.44L1109.62 754.8L1110.61 746.78L1111.18 743.09L1111.88 739.22L1112.45 736.65L1113.16 734.03L1113.72 732.35L1114.29 731.03L1114.86 730.05L1115.42 729.39L1115.99 729.04L1116.27 728.98L1116.7 729.05L1117.26 729.4L1117.83 730.07L1118.39 731.06L1118.96 732.39L1119.53 734.07L1120.09 736.12L1120.66 738.59L1121.22 741.5L1122.22 747.85L1123.06 754.85L1123.91 763.76L1124.62 773.21L1125.33 785.37L1125.89 798.14L1126.32 810.59L1126.74 827.25L1127.03 842.47L1127.17 846.5L1128.58 846.5L1129.15 819.06L1129.86 796.89L1130.28 787.24L1130.85 776.88L1131.41 768.51L1132.12 760.03L1132.83 753.16L1133.68 746.53L1134.53 741.26L1135.38 737.13L1136.37 733.49L1136.79 732.29L1137.36 730.99L1137.78 730.23L1138.35 729.5L1138.77 729.16L1139.34 728.98L1139.91 729.11L1140.33 729.41L1140.9 730.08L1141.32 730.79L1141.89 732.03L1142.31 733.19L1143.16 736.12L1144.01 739.97L1144.86 744.88L1145.57 749.94L1146.28 756.08L1146.98 763.6L1147.55 770.91L1148.12 779.79L1148.68 790.89L1149.11 801.36L1149.53 814.73L1150.24 846.5L1151.65 846.5L1152.36 814.91L1153.07 794.26L1153.49 785.11L1154.06 775.22L1154.63 767.17L1155.19 760.47L1155.9 753.54L1156.75 746.85L1157.6 741.53L1158.45 737.34L1159.44 733.66L1159.86 732.43L1160.43 731.1L1160.85 730.32L1161.42 729.56L1161.99 729.11L1162.55 728.97L1163.12 729.14L1163.68 729.61L1164.25 730.4L1164.67 731.2L1165.24 732.57L1165.67 733.82L1166.66 737.56L1167.51 741.81L1168.35 747.18L1169.2 753.96L1169.91 760.97L1170.48 767.74L1171.04 775.89L1171.61 785.94L1172.03 795.24L1172.74 816.35L1173.31 843.6L1173.45 846.5L1174.87 846.5L1175.43 818.87L1176 800.55L1176.42 790.26L1176.85 781.83L1177.41 772.6L1177.98 765.02L1178.97 754.58L1179.96 746.68L1180.53 743.04L1181.23 739.21L1181.8 736.67L1182.51 734.06L1183.07 732.4L1183.64 731.08L1184.21 730.09L1184.91 729.3L1185.48 729.01L1185.9 729L1186.19 729.09L1186.75 729.49L1187.32 730.2L1187.89 731.23L1188.45 732.59L1189.02 734.3L1189.58 736.39L1190.15 738.88L1190.72 741.82L1191.71 748.2L1192.56 755.22L1193.41 764.14L1194.11 773.6L1194.82 785.76L1195.39 798.52L1195.81 810.96L1196.24 827.59L1196.52 842.78L1196.66 846.5L1198.08 846.5L1198.78 814.26L1199.49 793.92L1199.92 784.87L1200.48 775.07L1201.05 767.08L1201.62 760.43L1202.32 753.54L1203.17 746.87L1204.02 741.58L1204.87 737.4L1205.86 733.71L1206.29 732.48L1206.85 731.14L1207.28 730.36L1207.84 729.59L1208.41 729.13L1208.97 728.98L1209.54 729.12L1210.11 729.58L1210.67 730.34L1211.1 731.12L1211.66 732.46L1212.09 733.68L1213.08 737.35L1213.93 741.52L1214.78 746.79L1215.63 753.43L1216.33 760.29L1217.04 768.75L1217.61 777.08L1218.17 787.38L1218.6 796.96L1219.31 818.89L1219.87 846.5L1221.29 846.5L1221.43 844.11L1221.71 828.6L1222.14 811.71L1222.85 792.25L1223.41 780.93L1223.98 771.9L1224.69 762.81L1225.39 755.49L1226.1 749.5L1226.81 744.55L1227.66 739.75L1228.51 735.98L1229.36 733.1L1229.78 731.97L1230.35 730.75L1230.77 730.05L1231.34 729.39L1231.76 729.1L1232.33 728.98L1232.89 729.16L1233.46 729.64L1234.03 730.43L1234.45 731.23L1235.02 732.59L1235.44 733.84L1236.43 737.57L1237.28 741.78L1238.13 747.12L1238.98 753.83L1239.69 760.77L1240.25 767.46L1240.82 775.5L1241.39 785.38L1241.81 794.5L1242.52 815.07L1243.23 846.5L1244.64 846.5L1245.35 815.44L1245.77 802.01L1246.2 791.49L1246.76 780.35L1247.33 771.44L1247.9 764.1L1248.6 756.55L1249.31 750.38L1250.02 745.28L1250.87 740.33L1251.72 736.44L1252.57 733.45L1252.99 732.26L1253.56 730.98L1253.98 730.23L1254.55 729.51L1254.97 729.17L1255.54 728.98L1256.11 729.1L1256.67 729.52L1257.24 730.24L1257.66 730.99L1258.23 732.28L1258.65 733.46L1259.64 737.04L1260.63 741.88L1261.48 747.23L1262.33 753.95L1263.04 760.91L1263.61 767.62L1264.17 775.68L1264.74 785.59L1265.16 794.75L1265.87 815.41L1266.58 846.5L1267.99 846.5L1268.7 815.22L1269.27 798.1L1269.69 788.34L1270.12 780.27L1270.54 773.44L1271.11 765.77L1272.1 755.2L1273.09 747.2L1273.66 743.5L1274.36 739.62L1274.93 737.03L1275.64 734.36L1276.2 732.65L1276.77 731.28L1277.34 730.24L1278.04 729.38L1278.61 729.04L1278.89 728.99L1279.32 729.04L1279.88 729.38L1280.45 730.02L1281.02 730.98L1281.58 732.26L1282.15 733.88L1282.71 735.86L1283.28 738.24L1283.85 741.05L1284.84 747.15L1285.83 755.13L1286.68 763.97L1287.38 773.32L1288.09 785.33L1288.66 797.88L1289.08 810.05L1289.51 826.22L1289.93 846.5L1291.35 846.5L1291.49 842.46L1292.05 815.85L1292.76 795.05L1293.19 785.85L1293.75 775.9L1294.32 767.81L1295.03 759.56L1295.73 752.86L1296.58 746.36L1297.43 741.2L1298.28 737.12L1299.27 733.53L1299.7 732.33L1300.26 731.04L1300.69 730.28L1301.25 729.54L1301.82 729.11L1302.39 728.99L1302.95 729.16L1303.38 729.49L1303.94 730.19L1304.37 730.93L1304.93 732.19L1305.36 733.36L1306.21 736.31L1307.06 740.16L1307.91 745.05L1308.61 750.08L1309.32 756.17L1310.03 763.61L1310.74 772.86L1311.3 782.08L1311.87 793.66L1312.29 804.7L1312.72 818.95L1313.28 846.5L1314.7 846.5L1314.84 844.6L1315.41 817.11L1316.12 795.88L1316.54 786.54L1317.11 776.45L1317.67 768.27L1318.38 759.94L1319.09 753.17L1319.94 746.62L1320.79 741.4L1321.64 737.28L1322.63 733.65L1323.05 732.43L1323.62 731.11L1324.04 730.34L1324.61 729.58L1325.17 729.13L1325.74 728.98L1326.31 729.14L1326.87 729.59L1327.44 730.35L1327.86 731.13L1328.43 732.45L1328.85 733.66L1329.84 737.3L1330.69 741.43L1331.54 746.65L1332.39 753.22L1333.1 759.99L1333.67 766.51L1334.23 774.33L1334.8 783.88L1335.22 792.66L1335.93 812.21L1336.35 829.21L1336.64 844.85L1336.78 846.5L1338.19 846.5L1338.48 831.2L1338.9 813.63L1339.33 800.66L1339.89 787.46L1340.6 774.95L1341.31 765.27L1342.16 756.15L1343.15 747.94L1344.14 741.66L1344.71 738.76L1345.27 736.31L1345.84 734.25L1346.4 732.56L1346.97 731.21L1347.68 729.99L1348.24 729.36L1348.81 729.03L1349.23 728.99L1349.52 729.05L1350.08 729.4L1350.79 730.27L1351.36 731.32L1351.92 732.7L1352.49 734.42L1353.2 737.1L1353.9 740.42L1354.61 744.46L1355.18 748.31L1355.74 752.79L1356.31 758.03L1357.3 769.56L1357.87 778.02L1358.29 785.64L1359 802.03L1359.57 820.82L1360.13 846.5L1360.7 846.5"/>
<path stroke="#d95319" d="M201.4 304.64L212.01 314.79L212.16 291.58L233.24 311.75L233.39 288.53L253.63 307.9L253.77 284.68L272.31 302.42L272.45 279.2L287.59 293.69L287.74 270.47L296.65 279L296.79 255.78L854.43 789.31L854.58 766.09L861.51 772.73L861.65 749.51L874.11 761.42L874.25 738.21L890.1 753.37L890.24 730.15L908.5 747.62L908.64 724.4L928.17 743.09L928.31 719.87L948.84 739.51L948.98 716.29L970.21 736.6L970.35 713.38L992 734.1L992.15 710.88L1014.08 731.87L1014.23 708.65L1036.45 729.91L1036.59 706.7L1059.09 728.23L1059.23 705.01L1081.88 726.67L1082.02 703.46L1104.81 725.26L1104.95 702.04L1127.73 723.84L1127.88 700.62L1150.95 722.69L1151.09 699.48L1174.02 721.41L1174.16 698.19L1197.23 720.27L1197.37 697.05L1220.58 719.26L1220.72 696.04L1243.93 718.25L1244.08 695.03L1267.15 717.1L1267.29 693.88L1290.64 716.22L1290.78 693.01L1313.99 715.21L1314.13 692L1337.35 714.2L1337.49 690.98L1360.7 713.19"/>
</g>
<rect x="201.5" y="228.5" width="1159.0" height="588.0" stroke="#262626" stroke-width="1" fill="none" shape-rendering="crispEdges"/>
<g fill="#333">
<text transform="translate(195.6 263.4) scale(0.9434 1)" font-size="14.13" text-anchor="end">0</text>
<text transform="translate(195.6 323.4) scale(0.9434 1)" font-size="14.13" text-anchor="end">-10</text>
<text transform="translate(195.6 382.4) scale(0.9434 1)" font-size="14.13" text-anchor="end">-20</text>
<text transform="translate(195.6 442.4) scale(0.9434 1)" font-size="14.13" text-anchor="end">-30</text>
<text transform="translate(195.6 502.4) scale(0.9434 1)" font-size="14.13" text-anchor="end">-40</text>
<text transform="translate(195.6 562.4) scale(0.9434 1)" font-size="14.13" text-anchor="end">-50</text>
<text transform="translate(195.6 621.4) scale(0.9434 1)" font-size="14.13" text-anchor="end">-60</text>
<text transform="translate(195.6 681.4) scale(0.9434 1)" font-size="14.13" text-anchor="end">-70</text>
<text transform="translate(195.6 741.4) scale(0.9434 1)" font-size="14.13" text-anchor="end">-80</text>
<text transform="translate(195.6 800.4) scale(0.9434 1)" font-size="14.13" text-anchor="end">-90</text>
<text transform="translate(1389.9 263.4) scale(0.9434 1)" font-size="14.13" text-anchor="middle">6.2</text>
<text transform="translate(1388.6 323.4) scale(0.9434 1)" font-size="14.13" text-anchor="middle">-1.831</text>
<text transform="translate(1388.6 382.4) scale(0.9434 1)" font-size="14.13" text-anchor="middle">-9.862</text>
<text transform="translate(1388.6 442.4) scale(0.9434 1)" font-size="14.13" text-anchor="middle">-17.893</text>
<text transform="translate(1388.6 502.4) scale(0.9434 1)" font-size="14.13" text-anchor="middle">-25.924</text>
<text transform="translate(1388.6 562.4) scale(0.9434 1)" font-size="14.13" text-anchor="middle">-33.955</text>
<text transform="translate(1388.6 621.4) scale(0.9434 1)" font-size="14.13" text-anchor="middle">-41.985</text>
<text transform="translate(1388.6 681.4) scale(0.9434 1)" font-size="14.13" text-anchor="middle">-50.016</text>
<text transform="translate(1388.6 741.4) scale(0.9434 1)" font-size="14.13" text-anchor="middle">-58.047</text>
<text transform="translate(1388.6 800.4) scale(0.9434 1)" font-size="14.13" text-anchor="middle">-66.078</text>
<text transform="translate(201.4 834.2) scale(0.9434 1)" font-size="14.13" text-anchor="middle">0</text>
<text transform="translate(443.0 834.2) scale(0.9434 1)" font-size="14.13" text-anchor="middle">5</text>
<text transform="translate(684.5 834.2) scale(0.9434 1)" font-size="14.13" text-anchor="middle">10</text>
<text transform="translate(926.1 834.2) scale(0.9434 1)" font-size="14.13" text-anchor="middle">15</text>
<text transform="translate(1167.6 834.2) scale(0.9434 1)" font-size="14.13" text-anchor="middle">20</text>
<text transform="translate(781.0 852.0) scale(0.9434 1)" font-size="14.13" text-anchor="middle">Frequency (kHz)</text>
<text transform="translate(169.2 523.4) rotate(-90) scale(0.9434 1)" font-size="14.13" text-anchor="middle">Magnitude (dB)</text>
<text transform="translate(1430.8 523.0) rotate(-90) scale(0.9434 1)" font-size="15.55" text-anchor="middle">Phase (radians)</text>
</g>
<g fill="#000"><text transform="translate(781.0 222.8) scale(0.9434 1)" font-size="15.55" text-anchor="middle" font-weight="bold">Magnitude Response (dB) and Phase Response</text></g>
<rect x="1104.5" y="238.5" width="223" height="34" fill="#fff" stroke="#262626" stroke-width="1" shape-rendering="crispEdges"/>
<line x1="1107" x2="1147" y1="248.5" y2="248.5" stroke="#0072bd" stroke-width="1" shape-rendering="crispEdges"/>
<line x1="1107" x2="1147" y1="263.5" y2="263.5" stroke="#d95319" stroke-width="1" shape-rendering="crispEdges"/>
<g fill="#111"><text transform="translate(1151.0 252.9) scale(0.9434 1)" font-size="12.72" text-anchor="start">Bandpass Equiripple: Magnitude</text><text transform="translate(1151.0 268.7) scale(0.9434 1)" font-size="12.72" text-anchor="start">Bandpass Equiripple: Phase</text></g>
</svg>
<div style="position:absolute;left:0px;top:0px;width:1538px;height:896px;box-sizing:border-box;border:1px solid #6d6d6d;pointer-events:none"></div>
</body></html>
